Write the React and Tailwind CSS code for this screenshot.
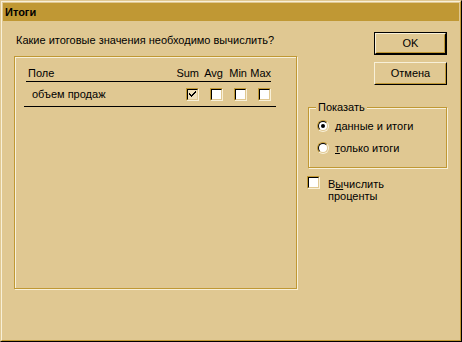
import React from "react";

const BG = "bg-[#e0c892]";

function CheckBox({ checked = false, focused = false }) {
  return (
    <div className="w-[13px] h-[13px] border border-t-[#c09834] border-l-[#c09834] border-r-[#f8f0d8] border-b-[#f8f0d8] flex">
      <div
        className={
          "flex-1 border border-t-black border-l-black border-r-[#e0c892] border-b-[#e0c892] flex items-center justify-center " +
          (checked ? "bg-[#efe0bc]" : "bg-white")
        }
      >
        {checked && (
          <svg width="7" height="7" viewBox="0 0 7 7" className="block">
            <path
              d="M0 2 L0 4 L2 6 L7 1 L7 -1 L2 4 Z"
              fill="black"
              shapeRendering="crispEdges"
            />
          </svg>
        )}
      </div>
    </div>
  );
}

function Radio({ checked = false }) {
  return (
    <div className="w-[12px] h-[12px] rounded-full border border-t-[#c09834] border-l-[#c09834] border-r-[#f8f0d8] border-b-[#f8f0d8] flex">
      <div className="flex-1 rounded-full border border-t-black border-l-black border-r-[#e0c892] border-b-[#e0c892] bg-white flex items-center justify-center">
        {checked && <div className="w-[4px] h-[4px] rounded-full bg-black" />}
      </div>
    </div>
  );
}

export default function App() {
  return (
    <div
      className={
        "w-[462px] h-[342px] " +
        BG +
        " border border-t-[#e0c892] border-l-[#e0c892] border-r-black border-b-black text-[11px] leading-[13px] text-black"
      }
      style={{ fontFamily: '"Liberation Sans", Arial, sans-serif' }}
    >
      <div className="w-full h-full border border-t-[#f8f0d8] border-l-[#f8f0d8] border-r-[#c09834] border-b-[#c09834] p-[1px] flex flex-col">
        {/* Title bar */}
        <div className="h-[18px] bg-[#c09834] flex items-center pl-[2px] font-bold">
          Итоги
        </div>

        {/* Body */}
        <div className="flex pl-[11px]">
          {/* Left column */}
          <div className="flex flex-col w-[283px]">
            <div className="mt-[13px] ml-[2px] whitespace-nowrap">
              Какие итоговые значения необходимо вычислить?
            </div>
            <div className="mt-[9px] h-[233px] border border-[#c09834] shadow-[1px_1px_0_#f8f0d8,inset_1px_1px_0_#f8f0d8] flex flex-col">
              {/* header */}
              <div className="mt-[10px] ml-[11px] w-[245px] flex border-b border-black pb-[1px]">
                <div className="flex-1 pl-[2px]">Поле</div>
                <div className="grid grid-cols-[24px_24px_24px_24px]">
                  <div className="text-right">Sum</div>
                  <div className="text-right">Avg</div>
                  <div className="text-right">Min</div>
                  <div className="text-right">Max</div>
                </div>
              </div>
              {/* row */}
              <div className="ml-[9px] w-[252px] h-[25px] flex items-center border-b border-black pr-[5px]">
                <div className="flex-1 pl-[8px]">объем продаж</div>
                <div className="grid grid-cols-[24px_24px_24px_24px]">
                  <div className="flex justify-end">
                    <CheckBox checked />
                  </div>
                  <div className="flex justify-end">
                    <CheckBox />
                  </div>
                  <div className="flex justify-end">
                    <CheckBox />
                  </div>
                  <div className="flex justify-end">
                    <CheckBox />
                  </div>
                </div>
              </div>
            </div>
          </div>

          {/* Right column */}
          <div className="ml-[10px] w-[140px] flex flex-col">
            <div className="ml-[67px] mt-[11px] w-[73px] h-[23px] border border-black flex">
              <div className="flex-1 border border-t-[#f8f0d8] border-l-[#f8f0d8] border-r-black border-b-black flex">
                <div className="flex-1 border border-t-[#e0c892] border-l-[#e0c892] border-r-[#c09834] border-b-[#c09834] flex items-center justify-center">
                  OK
                </div>
              </div>
            </div>
            <div className="ml-[67px] mt-[7px] w-[73px] h-[23px] border border-t-[#f8f0d8] border-l-[#f8f0d8] border-r-black border-b-black flex">
              <div className="flex-1 border border-t-[#e0c892] border-l-[#e0c892] border-r-[#c09834] border-b-[#c09834] flex items-center justify-center">
                Отмена
              </div>
            </div>

            {/* Group box */}
            <div className="relative ml-[1px] mt-[22px] w-[139px] h-[61px] border border-[#c09834] shadow-[1px_1px_0_#f8f0d8,inset_1px_1px_0_#f8f0d8] flex flex-col pl-[8px] pt-[12px]">
              <span className={"absolute left-[7px] top-[-7px] px-[2px] " + BG}>
                Показать
              </span>
              <div className="flex items-center h-[12px]">
                <Radio checked />
                <span className="ml-[6px]">
                  <span className="underline">д</span>анные и итоги
                </span>
              </div>
              <div className="flex items-center h-[12px] mt-[10px]">
                <Radio />
                <span className="ml-[6px]">
                  <span className="underline">т</span>олько итоги
                </span>
              </div>
            </div>

            {/* Checkbox */}
            <div className="mt-[8px] flex items-start">
              <CheckBox />
              <div className="ml-[8px] mt-[2px] leading-[12px]">
                В<span className="underline">ы</span>числить
                <br />
                проценты
              </div>
            </div>
          </div>
        </div>
      </div>
    </div>
  );
}
